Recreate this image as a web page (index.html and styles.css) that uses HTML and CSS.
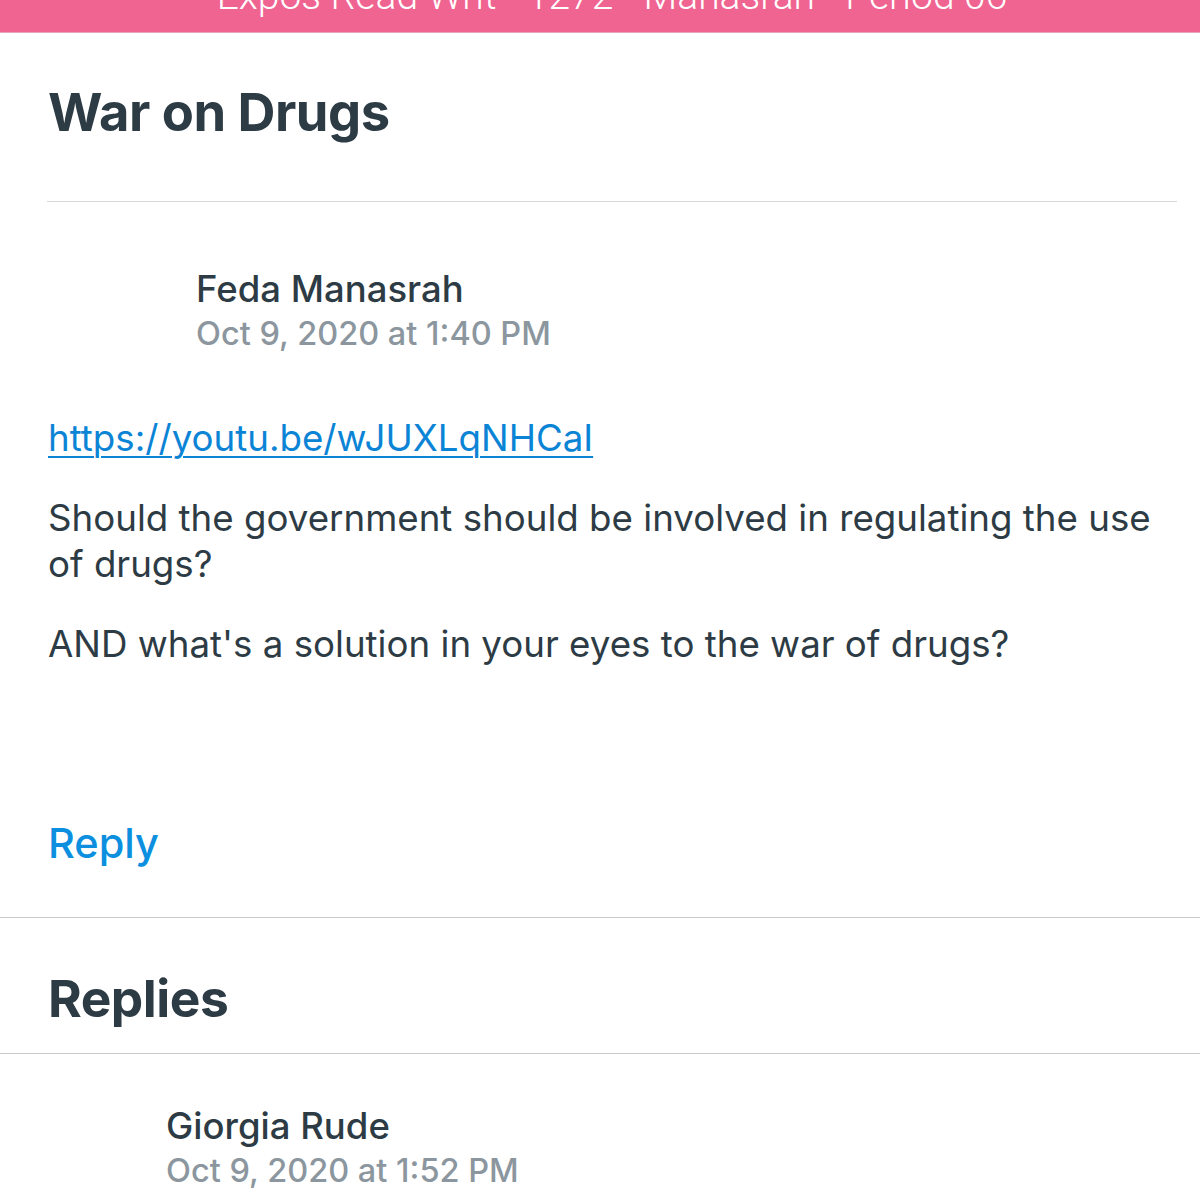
FILE: index.html
```html
<!DOCTYPE html>
<html>
<head>
<meta charset="utf-8">
<link rel="stylesheet" href="styles.css">
</head>
<body>
<header class="topbar">
  <div class="topbar-title">Expos Read Writ - 1272 - Manasrah - Period 06</div>
</header>
<main>
  <section class="topic">
    <h1 class="topic-title">War on Drugs</h1>
    <hr class="rule-inset">
    <div class="author">
      <div class="avatar"></div>
      <div class="author-meta">
        <div class="author-name">Feda Manasrah</div>
        <div class="author-date">Oct 9, 2020 at 1:40 PM</div>
      </div>
    </div>
    <div class="message">
      <p><a class="link" href="#">https://youtu.be/wJUXLqNHCaI</a></p>
      <p>Should the government should be involved in regulating the use of drugs?</p>
      <p>AND what's a solution in your eyes to the war of drugs?</p>
    </div>
    <div class="reply-row"><a class="reply-btn" href="#">Reply</a></div>
  </section>
  <section class="replies">
    <h2 class="replies-title">Replies</h2>
    <div class="entry">
      <div class="avatar small"></div>
      <div class="author-meta">
        <div class="author-name">Giorgia Rude</div>
        <div class="author-date">Oct 9, 2020 at 1:52 PM</div>
      </div>
    </div>
  </section>
</main>
</body>
</html>
```

FILE: styles.css
```css
html, body {
  margin: 0;
  padding: 0;
  background: #ffffff;
  font-family: Inter, Roboto, "Noto Sans", sans-serif;
  color: #2d3b45;
  overflow: hidden;
}
.topbar {
  height: 32px;
  background: #f06491;
  border-bottom: 1px solid #e9a6bb;
  overflow: hidden;
}
.topbar-title {
  color: #ffffff;
  font-family: Roboto, "Noto Sans", sans-serif;
  font-size: 39px;
  font-weight: 300;
  text-align: center;
  line-height: 36px;
  margin-top: -22px;
  padding-left: 24px;
}
.topic {
  padding: 0 0 0 48px;
}
.topic-title {
  margin: 0;
  padding-top: 51px;
  font-size: 52.5px;
  font-weight: 700;
  line-height: 56px;
  letter-spacing: -0.5px;
}
.rule-inset {
  border: 0;
  border-top: 1px solid #d6d9dc;
  margin: 61px 23px 0 -1px;
}
.author {
  display: flex;
  margin-top: 64px;
}
.avatar {
  width: 148px;
  flex: none;
}
.avatar.small {
  width: 118px;
}
.author-name {
  font-size: 36.5px;
  font-weight: 500;
  line-height: 46px;
}
.author-date {
  font-size: 32.5px;
  color: #8b969e;
  line-height: 44px;
  font-weight: 500;
}
.message {
  margin-top: 59px;
  font-size: 36.7px;
  line-height: 46px;
  padding-right: 22px;
}
.message p {
  margin: 0 0 34px 0;
}
.link {
  color: #0b84d6;
  text-decoration: underline;
  text-decoration-thickness: 2px;
  text-underline-offset: 5px;
}
.reply-row {
  padding-top: 117px;
  height: 99px;
}
.reply-btn {
  color: #0b8fde;
  font-size: 41.5px;
  font-weight: 500;
  text-decoration: none;
  line-height: 50px;
}
.replies {
  border-top: 1px solid #c8cbce;
}
.replies-title {
  margin: 0;
  padding: 52px 0 0 48px;
  height: 83px;
  font-size: 51.5px;
  font-weight: 700;
  line-height: 56px;
  letter-spacing: -0.5px;
  border-bottom: 1px solid #c8cbce;
}
.entry {
  display: flex;
  padding: 49px 0 0 48px;
}
```
